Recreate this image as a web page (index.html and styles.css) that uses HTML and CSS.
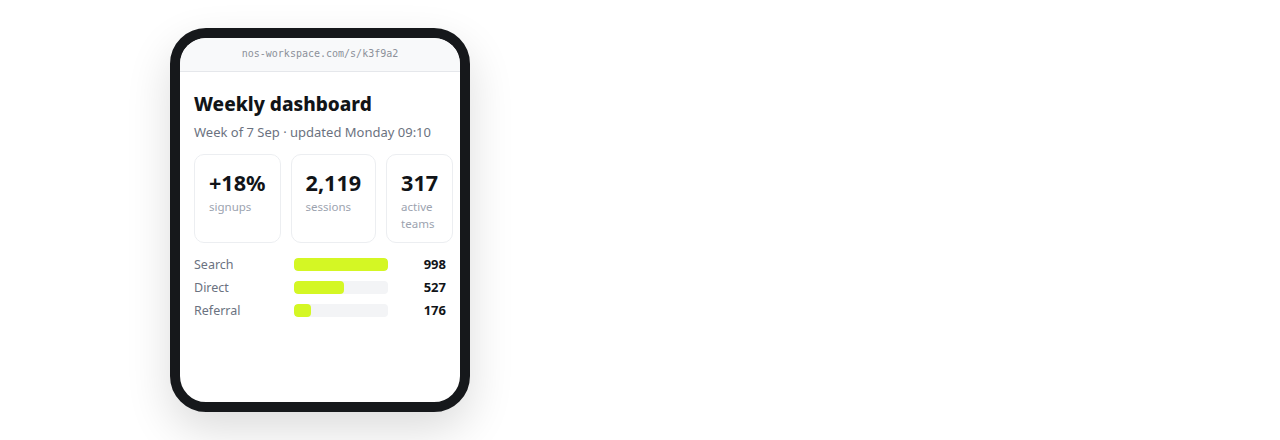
FILE: index.html
```html
<!DOCTYPE html>
<html>
<head>
<meta charset="utf-8">
<link rel="stylesheet" href="styles.css">
</head>
<body>
<div class="stage">
  <div class="phone">
    <div class="screen">
      <div class="urlbar">nos-workspace.com/s/k3f9a2</div>
      <div class="content">
        <h1 class="title">Weekly dashboard</h1>
        <p class="subtitle">Week of 7 Sep · updated Monday 09:10</p>
        <div class="cards">
          <div class="card"><div class="num">+18%</div><div class="label">signups</div></div>
          <div class="card"><div class="num">2,119</div><div class="label">sessions</div></div>
          <div class="card"><div class="num">317</div><div class="label">active teams</div></div>
        </div>
        <div class="rows">
          <div class="rlabel">Search</div>
          <div class="track"><div class="fill" style="width:100%"></div></div>
          <div class="rval">998</div>
          <div class="rlabel">Direct</div>
          <div class="track"><div class="fill" style="width:52.8%"></div></div>
          <div class="rval">527</div>
          <div class="rlabel">Referral</div>
          <div class="track"><div class="fill" style="width:17.6%"></div></div>
          <div class="rval">176</div>
        </div>
      </div>
    </div>
  </div>
</div>
</body>
</html>
```
FILE: styles.css
```css
html, body {
  margin: 0;
  background: #ffffff;
  font-family: "Noto Sans", "Open Sans", sans-serif;
}
.stage {
  padding: 28px 0 0 170px;
  min-height: 440px;
  box-sizing: border-box;
}
.phone {
  width: 280px;
  height: 364px;
  border: 10px solid #16181b;
  border-radius: 36px;
  background: #ffffff;
  box-shadow: 0 18px 45px rgba(0, 0, 0, 0.14);
  overflow: hidden;
}
.screen {
  height: 100%;
  border-radius: 26px;
  overflow: hidden;
}
.urlbar {
  height: 33px;
  line-height: 31px;
  background: #f8f9fa;
  border-bottom: 1px solid #e5e7eb;
  text-align: center;
  font-family: "DejaVu Sans Mono", monospace;
  font-size: 10px;
  color: #8b9099;
}
.content {
  padding: 18px 14px 0 14px;
}
.title {
  margin: 0;
  font-size: 19px;
  font-weight: 800;
  line-height: 28px;
  color: #111418;
}
.subtitle {
  margin: 4px 0 0 0;
  font-size: 13px;
  line-height: 20px;
  color: #6b7280;
}
.cards {
  display: flex;
  gap: 10px;
  margin-top: 12px;
}
.card {
  flex: 1 1 0;
  border: 1px solid #eceef1;
  border-radius: 10px;
  padding: 14px 14px 12px 14px;
  height: 61px;
}
.num {
  font-size: 21.6px;
  font-weight: 700;
  line-height: 28px;
  color: #111418;
}
.label {
  margin-top: 1px;
  font-size: 11.5px;
  line-height: 17px;
  color: #9ca3af;
}
.rows {
  display: grid;
  grid-template-columns: 100px 94px 1fr;
  row-gap: 10px;
  align-items: center;
  margin-top: 15px;
}
.rlabel {
  font-size: 12.5px;
  line-height: 13px;
  color: #6b7280;
}
.track {
  height: 13px;
  background: #f3f4f6;
  border-radius: 4px;
  overflow: hidden;
}
.fill {
  height: 100%;
  background: #d4f724;
  border-radius: 4px;
}
.rval {
  text-align: right;
  font-size: 13px;
  font-weight: 700;
  line-height: 13px;
  color: #111418;
}
```
